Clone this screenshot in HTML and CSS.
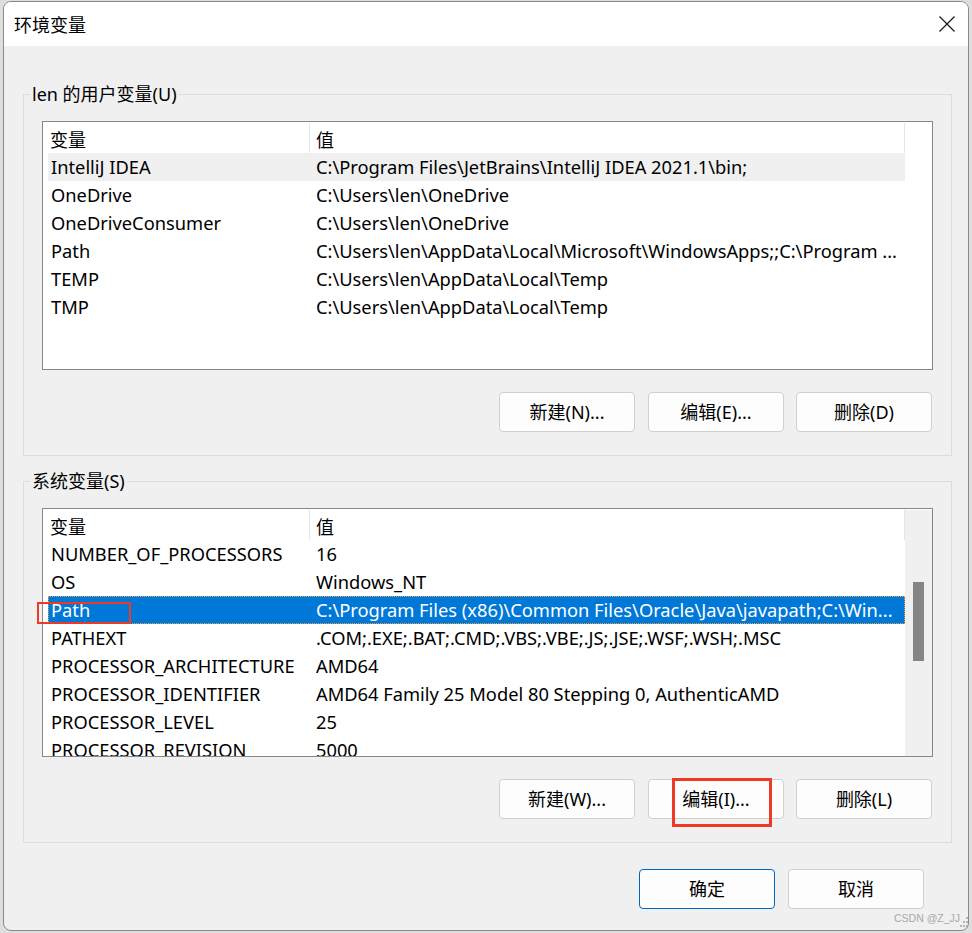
FILE: index.html
```html
<!DOCTYPE html>
<html lang="zh-CN">
<head>
<meta charset="utf-8">
<title>环境变量</title>
<link rel="stylesheet" href="styles.css">
</head>
<body>
<div class="window">
  <div class="titlebar">
    <span class="title">环境变量</span>
    <svg class="close" width="16" height="16" viewBox="0 0 16 16"><path d="M0.5 0.5 L15.5 15.5 M15.5 0.5 L0.5 15.5" stroke="#1a1a1a" stroke-width="1.3" fill="none"/></svg>
  </div>
  <div class="content">
    <fieldset class="group">
      <legend>len 的用户变量(U)</legend>
      <div class="list">
        <div class="list-main">
          <div class="head"><div class="h1">变量</div><div class="h2">值</div></div>
          <div class="row hover"><div class="c1">IntelliJ IDEA</div><div class="c2">C:\Program Files\JetBrains\IntelliJ IDEA 2021.1\bin;</div></div>
          <div class="row"><div class="c1">OneDrive</div><div class="c2">C:\Users\len\OneDrive</div></div>
          <div class="row"><div class="c1">OneDriveConsumer</div><div class="c2">C:\Users\len\OneDrive</div></div>
          <div class="row"><div class="c1">Path</div><div class="c2">C:\Users\len\AppData\Local\Microsoft\WindowsApps;;C:\Program ...</div></div>
          <div class="row"><div class="c1">TEMP</div><div class="c2">C:\Users\len\AppData\Local\Temp</div></div>
          <div class="row"><div class="c1">TMP</div><div class="c2">C:\Users\len\AppData\Local\Temp</div></div>
        </div>
        <div class="list-side"></div>
      </div>
      <div class="btns">
        <button class="btn">新建(N)...</button>
        <button class="btn btn-2">编辑(E)...</button>
        <button class="btn btn-3">删除(D)</button>
      </div>
    </fieldset>

    <fieldset class="group group-sys">
      <legend>系统变量(S)</legend>
      <div class="list">
        <div class="list-main">
          <div class="head"><div class="h1">变量</div><div class="h2">值</div></div>
          <div class="row"><div class="c1">NUMBER_OF_PROCESSORS</div><div class="c2">16</div></div>
          <div class="row"><div class="c1">OS</div><div class="c2">Windows_NT</div></div>
          <div class="row selected"><div class="c1">Path</div><div class="c2">C:\Program Files (x86)\Common Files\Oracle\Java\javapath;C:\Win...</div></div>
          <div class="row"><div class="c1">PATHEXT</div><div class="c2">.COM;.EXE;.BAT;.CMD;.VBS;.VBE;.JS;.JSE;.WSF;.WSH;.MSC</div></div>
          <div class="row"><div class="c1">PROCESSOR_ARCHITECTURE</div><div class="c2">AMD64</div></div>
          <div class="row"><div class="c1">PROCESSOR_IDENTIFIER</div><div class="c2">AMD64 Family 25 Model 80 Stepping 0, AuthenticAMD</div></div>
          <div class="row"><div class="c1">PROCESSOR_LEVEL</div><div class="c2">25</div></div>
          <div class="row"><div class="c1">PROCESSOR_REVISION</div><div class="c2">5000</div></div>
        </div>
        <div class="list-side scroll"><div class="thumb"></div></div>
      </div>
      <div class="btns">
        <button class="btn">新建(W)...</button>
        <button class="btn btn-2">编辑(I)...</button>
        <button class="btn btn-3">删除(L)</button>
      </div>
    </fieldset>

    <div class="footer">
      <button class="btn primary">确定</button>
      <button class="btn">取消</button>
    </div>
  </div>
  <div class="watermark">CSDN @Z_JJ</div>
  <svg class="grip" width="9" height="14" viewBox="0 0 9 14">
    <rect x="6" y="2" width="2" height="2" fill="#b5b5b5"/>
    <rect x="3" y="6" width="2" height="2" fill="#b5b5b5"/>
    <rect x="6" y="6" width="2" height="2" fill="#b5b5b5"/>
    <rect x="0" y="10" width="2" height="2" fill="#b5b5b5"/>
    <rect x="3" y="10" width="2" height="2" fill="#b5b5b5"/>
    <rect x="6" y="10" width="2" height="2" fill="#b5b5b5"/>
  </svg>
</div>
<div class="mark mark-path"></div>
<div class="mark mark-edit"></div>
</body>
</html>
```

FILE: styles.css
```css
html, body {
  margin: 0;
  padding: 0;
}
body {
  position: relative;
  width: 972px;
  height: 933px;
  overflow: hidden;
  background: #dedede;
  font-family: "Noto Sans", "Noto Sans CJK SC", sans-serif;
  font-size: 18px;
  color: #000;
}
.window {
  position: relative;
  box-sizing: border-box;
  margin: 1px 3px 0 3px;
  height: 930px;
  border: 1px solid #8a8a8a;
  border-radius: 8px;
  background: #f0f0f0;
  overflow: hidden;
}
.titlebar {
  height: 44px;
  background: #fff;
  display: flex;
  align-items: center;
  justify-content: space-between;
  padding: 0 13px 0 10px;
}
.title {
  font-family: "Noto Sans CJK SC", sans-serif;
  font-size: 18px;
  line-height: 24px;
}
.close {
  display: block;
}
.content {
  padding: 36px 16px 0 19px;
}
.group {
  margin: 0;
  min-width: 0;
  border: 1px solid #dcdcdc;
  padding: 15px 18px 23px 6px;
}
.group-sys {
  margin-top: 13px;
}
legend {
  padding: 0 2px;
  line-height: 24px;
  height: 24px;
}
.list {
  margin-left: 12px;
  height: 249px;
  box-sizing: border-box;
  border: 1px solid #828790;
  background: #fff;
  display: flex;
  overflow: hidden;
}
.list-main {
  flex: none;
  width: 857px;
  margin-left: 5px;
}
.list-side {
  flex: 1;
}
.scroll {
  margin-top: 1px;
  background: #f0f0f0;
}
.thumb {
  width: 11px;
  height: 79px;
  margin: 72px 0 0 8px;
  background: #858585;
}
.head {
  display: flex;
  height: 31px;
}
.head .h1,
.head .h2 {
  box-sizing: border-box;
  height: 30px;
  margin-top: 1px;
  line-height: 30px;
  padding-top: 2px;
  border-right: 1px solid #e5e5e5;
}
.head .h1 {
  width: 262px;
  padding-left: 2px;
}
.head .h2 {
  width: 595px;
  padding-left: 6px;
}
.row {
  display: flex;
  height: 28px;
  line-height: 28px;
  font-size: 18.3px;
  white-space: nowrap;
}
.row .c1,
.row .c2 {
  box-sizing: border-box;
  overflow: hidden;
}
.row .c1 {
  width: 262px;
  padding-left: 3px;
}
.row .c2 {
  width: 595px;
  padding-left: 6px;
}
.row.hover {
  background: #f0f0f0;
}
.row.selected {
  background: #0078d7;
  color: #fff;
  outline: 1px dotted #e8a040;
  outline-offset: -1px;
}
.btns {
  display: flex;
  justify-content: flex-end;
  margin-top: 22px;
  padding-right: 1px;
}
.btn {
  box-sizing: border-box;
  width: 136px;
  height: 40px;
  margin: 0;
  padding: 0;
  border: 1px solid #d0d0d0;
  border-radius: 4px;
  background: #fdfdfd;
  font-family: "Noto Sans", "Noto Sans CJK SC", sans-serif;
  font-size: 18px;
  color: #000;
  line-height: 38px;
}
.btn-2 {
  margin-left: 13px;
}
.btn-3 {
  margin-left: 12px;
}
.footer {
  display: flex;
  justify-content: flex-end;
  gap: 13px;
  margin-top: 26px;
  padding-right: 28px;
}
.btn.primary {
  border-color: #0067c0;
}
.watermark {
  position: absolute;
  left: 890px;
  top: 909px;
  font-family: "Liberation Sans", sans-serif;
  font-size: 10.5px;
  line-height: 14px;
  color: #a8a8a8;
}
.grip {
  position: absolute;
  left: 956px;
  top: 913px;
}
.mark {
  position: absolute;
  box-sizing: border-box;
  border: 2px solid #ee3a25;
}
.mark-path {
  left: 37px;
  top: 602px;
  width: 94px;
  height: 22px;
}
.mark-edit {
  left: 672px;
  top: 778px;
  width: 100px;
  height: 49px;
  border-width: 3px;
}
```
